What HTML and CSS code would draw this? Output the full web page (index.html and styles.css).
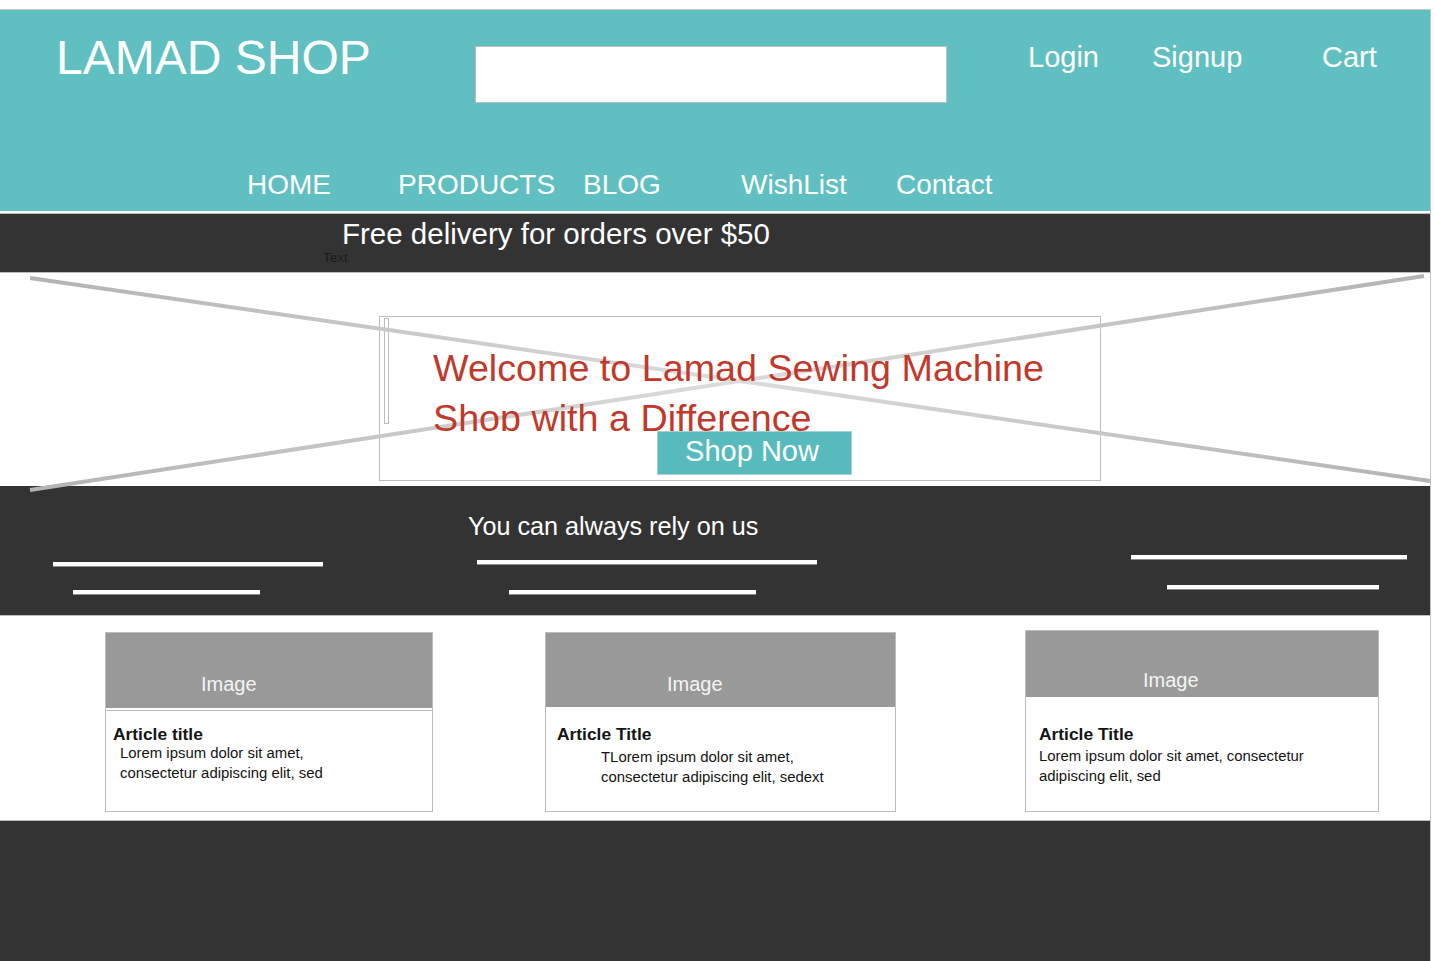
FILE: index.html
```html
<!DOCTYPE html>
<html lang="en">
<head>
<meta charset="utf-8">
<title>LAMAD SHOP</title>
<link rel="stylesheet" href="styles.css">
</head>
<body>
<div class="page">
  <header class="masthead">
    <div class="top-row">
      <div class="brand">LAMAD SHOP</div>
      <div class="search"></div>
      <nav class="account">
        <a class="acc acc-login">Login</a>
        <a class="acc acc-signup">Signup</a>
        <a class="acc acc-cart">Cart</a>
      </nav>
    </div>
    <nav class="main-nav">
      <a class="nav-item nav-home">HOME</a>
      <a class="nav-item nav-products">PRODUCTS</a>
      <a class="nav-item nav-blog">BLOG</a>
      <a class="nav-item nav-wish">WishList</a>
      <a class="nav-item nav-contact">Contact</a>
    </nav>
  </header>

  <div class="promo">
    <div class="promo-text">Free delivery for orders over $50</div>
    <div class="promo-label">Text</div>
  </div>

  <section class="hero">
    <svg class="hero-cross" width="1430" height="220" viewBox="0 0 1430 220">
      <defs>
        <linearGradient id="g1" gradientUnits="userSpaceOnUse" x1="30" y1="0" x2="1430" y2="0">
          <stop offset="0" stop-color="#b3b3b3"/>
          <stop offset="0.5" stop-color="#dcdcdc"/>
          <stop offset="1" stop-color="#b3b3b3"/>
        </linearGradient>
      </defs>
      <line x1="30" y1="5" x2="1430" y2="208" stroke="url(#g1)" stroke-width="4"/>
      <line x1="30" y1="217" x2="1424" y2="3" stroke="url(#g1)" stroke-width="4"/>
    </svg>
    <div class="hero-box">
      <span class="hero-tick"></span>
      <h1 class="hero-title">Welcome to Lamad Sewing Machine<br>Shop with a Difference</h1>
      <a class="hero-btn">Shop Now</a>
    </div>
  </section>

  <section class="rely">
    <div class="rely-title">You can always rely on us</div>
    <div class="rely-lines">
      <div class="rely-col rely-col-1">
        <span class="bar bar-a"></span>
        <span class="bar bar-b"></span>
      </div>
      <div class="rely-col rely-col-2">
        <span class="bar bar-a"></span>
        <span class="bar bar-b"></span>
      </div>
      <div class="rely-col rely-col-3">
        <span class="bar bar-a"></span>
        <span class="bar bar-b"></span>
      </div>
    </div>
  </section>

  <section class="articles">
    <article class="card card-1">
      <div class="card-img">Image</div>
      <div class="card-body">
        <h3 class="card-title">Article title</h3>
        <p class="card-text">Lorem ipsum dolor sit amet, consectetur adipiscing elit, sed</p>
      </div>
    </article>
    <article class="card card-2">
      <div class="card-img">Image</div>
      <div class="card-body">
        <h3 class="card-title">Article Title</h3>
        <p class="card-text">TLorem ipsum dolor sit amet, consectetur adipiscing elit, sedext</p>
      </div>
    </article>
    <article class="card card-3">
      <div class="card-img">Image</div>
      <div class="card-body">
        <h3 class="card-title">Article Title</h3>
        <p class="card-text">Lorem ipsum dolor sit amet, consectetur adipiscing elit, sed</p>
      </div>
    </article>
  </section>

  <footer class="footer"></footer>
</div>
</body>
</html>
```

FILE: styles.css
```css
* { box-sizing: border-box; }

html, body {
  margin: 0;
  padding: 0;
  background: #ffffff;
  font-family: "Liberation Sans", Arial, sans-serif;
  overflow: hidden;
}

.page {
  width: 1431px;
  margin-top: 9px;
  border-right: 1px solid #c4c4c4;
}

a { color: inherit; text-decoration: none; }

/* ---------- header ---------- */
.masthead {
  background: #5fbfc1;
  border-top: 1px solid #c6c6c6;
  height: 202px;
  margin-bottom: 2px;
  color: #ffffff;
}

.top-row {
  display: flex;
  align-items: flex-start;
  padding-left: 56px;
}

.brand {
  flex: 0 0 419px;
  font-size: 48px;
  line-height: 1;
  margin-top: 24px;
}

.search {
  flex: 0 0 472px;
  height: 57px;
  margin-top: 36px;
  background: #ffffff;
  border: 1px solid #bdbdbd;
}

.account {
  display: flex;
  margin-left: 81px;
  margin-top: 33px;
}

.acc {
  font-size: 29px;
  line-height: 1;
}
.acc-login { width: 124px; }
.acc-signup { width: 170px; }

.main-nav {
  display: flex;
  padding-left: 247px;
  margin-top: 68px;
}

.nav-item {
  font-size: 28px;
  line-height: 1;
}
.nav-home { width: 151px; }
.nav-products { width: 185px; }
.nav-blog { width: 158px; }
.nav-wish { width: 155px; }

/* ---------- promo bar ---------- */
.promo {
  background: #333333;
  border-top: 1px solid #bdbdbd;
  border-bottom: 1px solid #bdbdbd;
  height: 60px;
  padding-top: 5px;
}

.promo-text {
  color: #ffffff;
  font-size: 29.5px;
  line-height: 1;
  padding-left: 342px;
}

.promo-label {
  color: #1c1c1c;
  font-size: 13.5px;
  line-height: 1;
  margin-top: 2px;
  padding-left: 323px;
}

/* ---------- hero ---------- */
.hero {
  position: relative;
  height: 213px;
  padding-top: 43px;
  padding-left: 379px;
}

.hero-cross {
  position: absolute;
  left: 0;
  top: 0;
  overflow: visible;
  z-index: 2;
  pointer-events: none;
}

.hero-box {
  position: relative;
  width: 722px;
  height: 165px;
  border: 1px solid #bdbdbd;
  padding-top: 26px;
  padding-left: 53px;
}

.hero-tick {
  position: absolute;
  left: 4px;
  top: 1px;
  width: 5px;
  height: 106px;
  border: 1px solid #bdbdbd;
  background: #ffffff;
}

.hero-title {
  margin: 0;
  height: 88px;
  overflow: hidden;
  color: #c0392b;
  font-weight: normal;
  font-size: 37.7px;
  line-height: 50px;
  position: relative;
  z-index: 3;
}

.hero-btn {
  display: block;
  width: 195px;
  height: 44px;
  margin-left: 224px;
  padding-right: 5px;
  background: #57babc;
  border: 1px solid #a9cfd0;
  color: #ffffff;
  font-size: 29px;
  line-height: 38px;
  text-align: center;
  position: relative;
  z-index: 3;
}

/* ---------- rely ---------- */
.rely {
  background: #333333;
  height: 130px;
  border-bottom: 1px solid #bdbdbd;
  padding-top: 25px;
}

.rely-title {
  color: #ffffff;
  font-size: 25.2px;
  line-height: 30px;
  padding-left: 468px;
}

.rely-lines {
  display: flex;
  align-items: flex-start;
}

.rely-col {
  display: flex;
  flex-direction: column;
  align-items: flex-start;
}

.bar {
  display: block;
  height: 5px;
  background: #ffffff;
  border-bottom: 1px solid #8a8a8a;
}

.rely-col-1 { margin-left: 53px; width: 270px; margin-top: 21px; }
.rely-col-1 .bar-a { width: 270px; }
.rely-col-1 .bar-b { width: 187px; margin-left: 20px; margin-top: 23px; }

.rely-col-2 { margin-left: 154px; width: 340px; margin-top: 19px; }
.rely-col-2 .bar-a { width: 340px; }
.rely-col-2 .bar-b { width: 247px; margin-left: 32px; margin-top: 25px; }

.rely-col-3 { margin-left: 314px; width: 276px; margin-top: 14px; }
.rely-col-3 .bar-a { width: 276px; }
.rely-col-3 .bar-b { width: 212px; margin-left: 36px; margin-top: 25px; }

/* ---------- articles ---------- */
.articles {
  display: flex;
  align-items: flex-start;
  height: 204px;
  padding-left: 105px;
}

.card {
  border: 1px solid #bdbdbd;
  background: #ffffff;
  height: 180px;
  margin-top: 16px;
}

.card-1 { width: 328px; }
.card-2 { width: 351px; margin-left: 112px; }
.card-3 { width: 354px; margin-left: 129px; margin-top: 14px; height: 182px; }

.card-img {
  background: #999999;
  color: #f4f4f4;
  font-size: 20px;
  line-height: 24px;
  padding-top: 39px;
}

.card-1 .card-img { height: 75px; padding-left: 95px; margin-bottom: 2px; }
.card-2 .card-img { height: 74px; padding-left: 121px; }
.card-3 .card-img { height: 66px; padding-left: 117px; padding-top: 37px; }

.card-body { color: #141414; }
.card-1 .card-body { border-top: 1px solid #bdbdbd; padding: 13px 0 0 7px; }
.card-2 .card-body { padding: 17px 0 0 11px; }
.card-3 .card-body { padding: 27px 0 0 13px; }

.card-title {
  margin: 0;
  font-size: 17.4px;
  line-height: 20px;
  font-weight: bold;
}

.card-text {
  margin: 0;
  font-size: 14.9px;
  line-height: 20px;
}

.card-1 .card-text { margin-left: 7px; margin-top: -1px; width: 230px; }
.card-2 .card-text { margin-left: 44px; margin-top: 3px; width: 232px; }
.card-3 .card-text { margin-top: 2px; width: 280px; }

/* ---------- footer ---------- */
.footer {
  background: #333333;
  border-top: 1px solid #bdbdbd;
  height: 160px;
}
```
